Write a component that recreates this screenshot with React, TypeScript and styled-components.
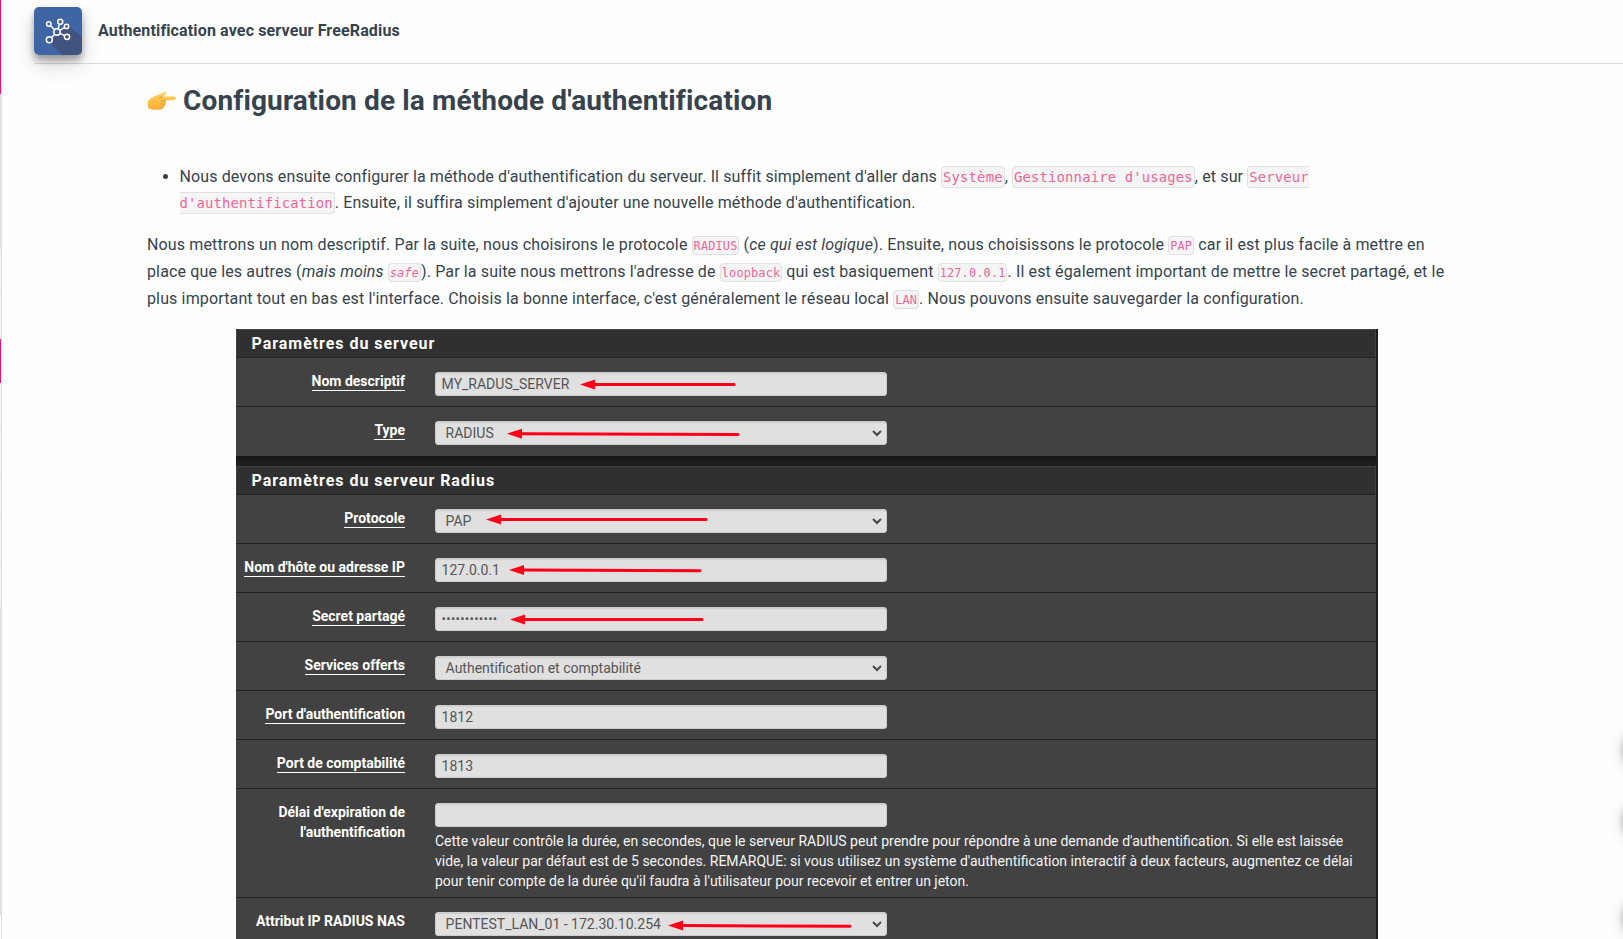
import React from "react";
import styled, { createGlobalStyle } from "styled-components";

const GlobalStyle = createGlobalStyle`
  * { box-sizing: border-box; }
  html, body { margin: 0; height: 939px; overflow: hidden; background: #fefefe; }
  body { font-family: Roboto, "Open Sans", sans-serif; color: #36434e; }
`;

const Page = styled.div`
  display: flex;
  height: 939px;
  overflow: hidden;
  position: relative;
`;

const Rail = styled.div`
  width: 2px;
  height: 939px;
  flex: none;
  display: flex;
  flex-direction: column;
`;

const RailItem = styled.div<{ $h: number; $fill: string; $edge?: string }>`
  height: ${(p) => p.$h}px;
  flex: none;
  background: ${(p) => p.$fill};
  border-right: 1px solid ${(p) => p.$edge || "#e0e0e0"};
  border-bottom: ${(p) => (p.$fill === "#f2f2f2" ? "1px solid #e0e0e0" : "none")};
`;

const Main = styled.main`
  flex: 1;
  min-width: 0;
  display: flex;
  flex-direction: column;
`;

const Header = styled.header`
  margin-left: 32px;
  height: 64px;
  flex: none;
  padding-top: 7px;
  border-bottom: 1px solid #dcdcdc;
  display: flex;
  align-items: flex-start;
  gap: 16px;
`;

const Logo = styled.div`
  width: 48px;
  height: 48px;
  flex: none;
  border-radius: 5px;
  overflow: hidden;
  box-shadow: 0 5px 7px rgba(0, 0, 0, 0.32), 0 10px 22px rgba(0, 0, 0, 0.16);
  svg { display: block; }
`;

const HeaderTitle = styled.div`
  font-size: 16px;
  font-weight: 700;
  line-height: 48px;
  letter-spacing: 0.14px;
  white-space: nowrap;
`;

const Article = styled.article`
  width: 1312px;
  margin-left: 145px;
  display: flex;
  flex-direction: column;
  letter-spacing: 0.14px;
`;

const Heading = styled.h1`
  margin: 17px 0 0;
  font-size: 28px;
  line-height: 40px;
  font-weight: 700;
  display: flex;
  align-items: center;
  gap: 7px;
  white-space: nowrap;
`;

const List = styled.ul`
  margin: 43px 0 0;
  padding: 0 0 0 32.5px;
  font-size: 16px;
  line-height: 26px;
  letter-spacing: 0.125px;
`;

const Line = styled.div`
  height: 26.8px;
  line-height: 26.8px;
  white-space: nowrap;
`;

const Paragraph = styled.div`
  margin-top: 16px;
  font-size: 16px;
`;

const Code = styled.code<{ $large?: boolean }>`
  font-family: "DejaVu Sans Mono", monospace;
  font-size: ${(p) => (p.$large ? 13.9 : 11.9)}px;
  letter-spacing: 0.15px;
  vertical-align: ${(p) => (p.$large ? "baseline" : "0.5px")};
  color: #f06595;
  background: #f5f5f5;
  border: 1px solid #e0e0e0;
  border-radius: 4px;
  padding: ${(p) => (p.$large ? 2 : 1.5)}px 1px;
`;

const Shot = styled.section`
  width: 1142px;
  margin: 16.6px 0 0 89px;
  background: #1e1e1e;
  font-size: 14px;
  letter-spacing: 0;
  color: #fff;
`;

const Panel = styled.div`
  width: 1140px;
  background: #424242;
  margin-bottom: 10px;
  box-shadow: 0 2px 5px rgba(0, 0, 0, 0.5);
  clip-path: inset(0 0 -10px 0);
`;

const PanelTitle = styled.h2`
  margin: 0;
  height: 29px;
  border: 1px solid #424242;
  border-bottom-color: #212121;
  background: #303030;
  padding-left: 14.6px;
  font-size: 16px;
  line-height: 28px;
  font-weight: 700;
  letter-spacing: 0.95px;
`;

const Row = styled.div<{ $h?: number; $last?: boolean }>`
  height: ${(p) => p.$h || 49}px;
  display: flex;
  border-bottom: ${(p) => (p.$last ? "none" : "1px solid #212121")};
`;

const Label = styled.div`
  width: 169px;
  flex: none;
  padding-top: 13px;
  text-align: right;
  font-weight: 700;
  font-size: 14px;
  line-height: 20px;
  white-space: nowrap;
`;

const LabelText = styled.span<{ $plain?: boolean }>`
  display: inline-block;
  line-height: 17px;
  border-bottom: ${(p) => (p.$plain ? "none" : "1px solid #fff")};
`;

const FieldColumn = styled.div`
  margin-left: 30px;
  padding-top: 14px;
`;

const Field = styled.div<{ $select?: boolean }>`
  position: relative;
  width: 452px;
  height: 24px;
  border-radius: 3px;
  border: 1px solid #ccc;
  background: #e0e0e0;
  box-shadow: inset 0 1px 1px rgba(0, 0, 0, 0.08);
  color: #555;
  font-size: 14px;
  line-height: 22px;
  padding: 0 4px 0 ${(p) => (p.$select ? 9.6 : 5.6)}px;
  display: flex;
  justify-content: space-between;
  align-items: center;
  white-space: nowrap;
`;

const Dots = styled.span`
  font-size: 13px;
  letter-spacing: 0.27px;
`;

const Help = styled.div`
  margin-top: 4px;
  line-height: 20px;
  font-size: 14px;
  color: #f5f5f5;
  white-space: nowrap;
`;

const Shade = styled.div<{ $y: number }>`
  position: absolute;
  left: 1623px;
  top: ${(p) => p.$y}px;
  width: 48px;
  height: 48px;
  border-radius: 50%;
  box-shadow: 0 4px 7px rgba(0, 0, 0, 0.3), 0 4px 20px rgba(0, 0, 0, 0.12);
`;

const ArrowLayer = styled.svg`
  position: absolute;
  left: -1px;
  top: 3px;
  overflow: visible;
`;

interface ArrowData {
  from: number;
  to: number;
  dy: number;
  slope?: number;
}

interface RowData {
  label: string[];
  value?: string;
  select?: boolean;
  plain?: boolean;
  arrow?: ArrowData;
  help?: string[];
  h?: number;
}

const serverRows: RowData[] = [
  { label: ["Nom descriptif"], value: "MY_RADUS_SERVER", arrow: { from: 145, to: 300, dy: 0 } },
  { label: ["Type"], value: "RADIUS", select: true, arrow: { from: 72, to: 304, dy: 0.2, slope: 0.8 } },
];

const radiusRows: RowData[] = [
  { label: ["Protocole"], value: "PAP", select: true, arrow: { from: 51, to: 272, dy: -2 } },
  { label: ["Nom d'hôte ou adresse IP"], value: "127.0.0.1", arrow: { from: 74, to: 266, dy: -0.5, slope: 0.8 } },
  { label: ["Secret partagé"], value: "••••••••••••", arrow: { from: 75, to: 268, dy: 0 } },
  { label: ["Services offerts"], value: "Authentification et comptabilité", select: true },
  { label: ["Port d'authentification"], value: "1812" },
  { label: ["Port de comptabilité"], value: "1813" },
  {
    label: ["Délai d'expiration de", "l'authentification"],
    plain: true,
    h: 109,
    help: [
      "Cette valeur contrôle la durée, en secondes, que le serveur RADIUS peut prendre pour répondre à une demande d'authentification. Si elle est laissée",
      "vide, la valeur par défaut est de 5 secondes. REMARQUE: si vous utilisez un système d'authentification interactif à deux facteurs, augmentez ce délai",
      "pour tenir compte de la durée qu'il faudra à l'utilisateur pour recevoir et entrer un jeton.",
    ],
  },
  {
    label: ["Attribut IP RADIUS NAS"],
    value: "PENTEST_LAN_01 - 172.30.10.254",
    select: true,
    plain: true,
    arrow: { from: 233, to: 416, dy: 1, slope: 0.8 },
  },
];

function RedArrow({ from, to, dy, slope = 0 }: ArrowData) {
  const y = 8.5 + dy;
  return (
    <ArrowLayer width="452" height="16">
      <path d={`M${from} ${y}l15-5v10z`} fill="#ff0018" />
      <path d={`M${from + 13} ${y}L${to - 1} ${y + slope}`} stroke="#ff0018" strokeWidth="3" strokeLinecap="round" />
    </ArrowLayer>
  );
}

function FormRow({ row, last }: { row: RowData; last?: boolean }) {
  const secret = row.value?.startsWith("•");
  return (
    <Row $h={row.h} $last={last}>
      <Label>
        {row.label.map((t) => (
          <div key={t}><LabelText $plain={row.plain}>{t}</LabelText></div>
        ))}
      </Label>
      <FieldColumn>
        <Field $select={row.select}>
          {secret ? <Dots>{row.value}</Dots> : <span>{row.value}</span>}
          {row.select && (
            <svg width="10" height="8" viewBox="0 0 10 8">
              <path d="M1 2l4 4 4-4" fill="none" stroke="#484848" strokeWidth="2" />
            </svg>
          )}
          {row.arrow && <RedArrow {...row.arrow} />}
        </Field>
        {row.help && <Help>{row.help.map((t) => <div key={t}>{t}</div>)}</Help>}
      </FieldColumn>
    </Row>
  );
}

const railItems: [number, string, string?][] = [
  [94, "#ff0f72", "#fefefe"],
  [155, "#e0e0e0"],
  [45, "#f2f2f2"],
  [45, "#f2f2f2"],
  [44, "#ff0f72", "#fefefe"],
  [46, "#f2f2f2"],
  [45, "#f2f2f2"],
  [45, "#f2f2f2"],
  [45, "#f2f2f2"],
  [44, "#f2f2f2"],
  [308, "#e0e0e0"],
  [23, "#fefefe"],
];

export default function App() {
  return (
    <Page>
      <GlobalStyle />
      <Rail>
        {railItems.map(([h, fill, edge], i) => <RailItem key={i} $h={h} $fill={fill} $edge={edge} />)}
      </Rail>
      <Main>
        <Header>
          <Logo>
            <svg width="48" height="48" viewBox="0 0 48 48">
              <rect width="48" height="48" fill="#4065a5" />
              <path d="M34 18L48 30V48H28L14 34L23 25z" fill="#41547f" />
              <g fill="none" stroke="#fff" strokeWidth="1.5">
                <circle cx="23" cy="25" r="3.2" />
                <circle cx="14.8" cy="17" r="2.2" />
                <circle cx="26.2" cy="14.7" r="2.5" />
                <circle cx="32.5" cy="19.4" r="2.2" />
                <circle cx="33" cy="29.8" r="2.6" />
                <circle cx="15.3" cy="32.8" r="3" />
                <path d="M16.4 18.6l4.3 4.1M25.6 17.2l-1.8 4.7M30.6 20.6l-5 2.7M30.6 28.6l-4.8-2.2M17.5 30.8l3.3-3.5" />
              </g>
            </svg>
          </Logo>
          <HeaderTitle>Authentification avec serveur FreeRadius</HeaderTitle>
        </Header>
        <Article>
          <Heading>
            <svg width="29" height="20" viewBox="0 0 29 20">
              <defs>
                <linearGradient id="hand" x1="0" y1="0" x2="0" y2="1">
                  <stop offset="0" stopColor="#ffd257" />
                  <stop offset="1" stopColor="#f9ad35" />
                </linearGradient>
              </defs>
              <path d="M1 10C3 7 8 5 12 3.5L17 1.2C19.5.4 20 2.5 18 3.8L15.7 5.5H27Q29 6 29 7.3T27 9L18.7 9.5Q20 12 18.2 13 18.3 15.3 16.8 16 16 18.5 13.5 18.5 7 19.5 1.5 17.5Q0 14 1 10z" fill="url(#hand)" />
              <path d="M18.7 9.5l-5 .4M18 13l-4.7.2M16.6 16l-4 .2M15.7 5.5l-4 2" fill="none" stroke="#e6942c" strokeWidth=".8" />
            </svg>
            Configuration de la méthode d'authentification
          </Heading>
          <List>
            <li>
              Nous devons ensuite configurer la méthode d'authentification du serveur. Il suffit simplement d'aller dans <Code $large>Système</Code>, <Code $large>Gestionnaire d'usages</Code>, et sur <Code $large>Serveur d'authentification</Code>. Ensuite, il suffira simplement d'ajouter une nouvelle méthode d'authentification.
            </li>
          </List>
          <Paragraph>
            <Line>Nous mettrons un nom descriptif. Par la suite, nous choisirons le protocole <Code>RADIUS</Code> (<em>ce qui est logique</em>). Ensuite, nous choisissons le protocole <Code>PAP</Code> car il est plus facile à mettre en</Line>
            <Line>place que les autres (<em>mais moins <Code>safe</Code></em>). Par la suite nous mettrons l'adresse de <Code>loopback</Code> qui est basiquement <Code>127.0.0.1</Code>. Il est également important de mettre le secret partagé, et le</Line>
            <Line>plus important tout en bas est l'interface. Choisis la bonne interface, c'est généralement le réseau local <Code>LAN</Code>. Nous pouvons ensuite sauvegarder la configuration.</Line>
          </Paragraph>
          <Shot>
            <Panel>
              <PanelTitle>Paramètres du serveur</PanelTitle>
              {serverRows.map((r, i) => <FormRow key={i} row={r} last={i === 1} />)}
            </Panel>
            <Panel>
              <PanelTitle>Paramètres du serveur Radius</PanelTitle>
              {radiusRows.map((r, i) => <FormRow key={i} row={r} />)}
            </Panel>
          </Shot>
        </Article>
      </Main>
      <Shade $y={722} />
      <Shade $y={793} />
      <Shade $y={890} />
    </Page>
  );
}
